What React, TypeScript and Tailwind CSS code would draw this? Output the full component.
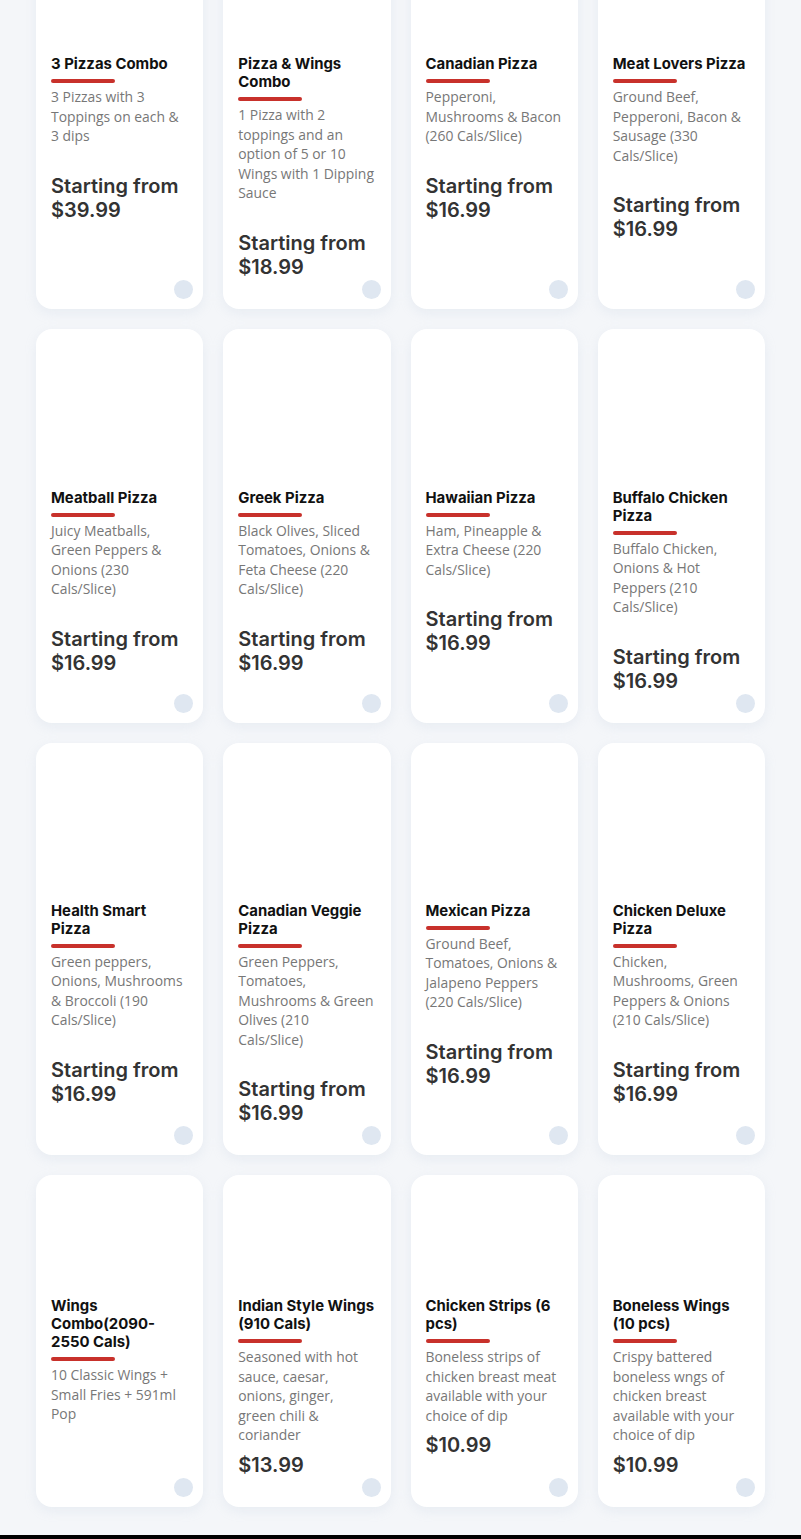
interface MenuItem {
  title: string;
  detail: string;
  price: string;
  starting?: boolean;
}

const rows: { imageHeight: string; items: MenuItem[] }[] = [
  {
    imageHeight: 'h-[145px]',
    items: [
      { title: '3 Pizzas Combo', detail: '3 Pizzas with 3 Toppings on each & 3 dips', price: '$39.99', starting: true },
      { title: 'Pizza & Wings Combo', detail: '1 Pizza with 2 toppings and an option of 5 or 10 Wings with 1 Dipping Sauce', price: '$18.99', starting: true },
      { title: 'Canadian Pizza', detail: 'Pepperoni, Mushrooms & Bacon (260 Cals/Slice)', price: '$16.99', starting: true },
      { title: 'Meat Lovers Pizza', detail: 'Ground Beef, Pepperoni, Bacon & Sausage (330 Cals/Slice)', price: '$16.99', starting: true },
    ],
  },
  {
    imageHeight: 'h-[145px]',
    items: [
      { title: 'Meatball Pizza', detail: 'Juicy Meatballs, Green Peppers & Onions (230 Cals/Slice)', price: '$16.99', starting: true },
      { title: 'Greek Pizza', detail: 'Black Olives, Sliced Tomatoes, Onions & Feta Cheese (220 Cals/Slice)', price: '$16.99', starting: true },
      { title: 'Hawaiian Pizza', detail: 'Ham, Pineapple & Extra Cheese (220 Cals/Slice)', price: '$16.99', starting: true },
      { title: 'Buffalo Chicken Pizza', detail: 'Buffalo Chicken, Onions & Hot Peppers (210 Cals/Slice)', price: '$16.99', starting: true },
    ],
  },
  {
    imageHeight: 'h-[144px]',
    items: [
      { title: 'Health Smart Pizza', detail: 'Green peppers, Onions, Mushrooms & Broccoli (190 Cals/Slice)', price: '$16.99', starting: true },
      { title: 'Canadian Veggie Pizza', detail: 'Green Peppers, Tomatoes, Mushrooms & Green Olives (210 Cals/Slice)', price: '$16.99', starting: true },
      { title: 'Mexican Pizza', detail: 'Ground Beef, Tomatoes, Onions & Jalapeno Peppers (220 Cals/Slice)', price: '$16.99', starting: true },
      { title: 'Chicken Deluxe Pizza', detail: 'Chicken, Mushrooms, Green Peppers & Onions (210 Cals/Slice)', price: '$16.99', starting: true },
    ],
  },
  {
    imageHeight: 'h-[107px]',
    items: [
      { title: 'Wings Combo(2090-2550 Cals)', detail: '10 Classic Wings + Small Fries + 591ml Pop', price: '' },
      // nbsp keeps the wrap the same as the original
      { title: 'Indian Style Wings (910 Cals)', detail: 'Seasoned with hot sauce, caesar, onions, ginger, green\u00a0chili & coriander', price: '$13.99' },
      { title: 'Chicken Strips (6 pcs)', detail: 'Boneless strips of chicken breast meat available with your choice of dip', price: '$10.99' },
      { title: 'Boneless Wings (10 pcs)', detail: 'Crispy battered boneless wngs of chicken breast available with your choice of dip', price: '$10.99' },
    ],
  },
];

const MenuCard = ({ item, imageHeight }: { item: MenuItem; imageHeight: string }) => {
  return (
    <div className="relative flex flex-col rounded-[16px] bg-white px-[15px] pt-[15px] pb-[30px] shadow-[0_4px_12px_rgba(180,195,215,0.18)]">
      <div className={imageHeight} />
      <h3 className="font-['Inter',sans-serif] text-[14.9px] font-bold leading-[18px] text-[#111]">
        {item.title}
      </h3>
      <div className="mt-[6px] h-[4px] w-[64px] rounded-full bg-[#c8312b]" />
      <p className="mt-[4px] font-['Open_Sans',sans-serif] text-[13.9px] leading-[19.5px] text-[#777]">
        {item.detail}
      </p>
      {item.price && (
        <p
          className={`font-['Inter',sans-serif] text-[20px] font-semibold leading-[24px] text-[#333] ${
            item.starting ? 'mt-[28px]' : 'mt-[8px]'
          }`}
        >
          {item.starting && (
            <>
              Starting from
              <br />
            </>
          )}
          {item.price}
        </p>
      )}
      <span className="absolute right-[10px] bottom-[10px] h-[19px] w-[19px] rounded-full bg-[#dfe7f1]" />
    </div>
  );
};

const App = () => {
  return (
    <div className="min-h-[1539px] overflow-hidden bg-[#f4f6f9]">
      <div className="-mt-[105px] flex flex-col gap-[20px] px-[36px] pb-[28px]">
        {rows.map((row, i) => (
          <div key={i} className="grid grid-cols-4 gap-[20px]">
            {row.items.map((item) => (
              <MenuCard key={item.title} item={item} imageHeight={row.imageHeight} />
            ))}
          </div>
        ))}
      </div>
      <div className="h-[4px] bg-black" />
    </div>
  );
};

export default App;
